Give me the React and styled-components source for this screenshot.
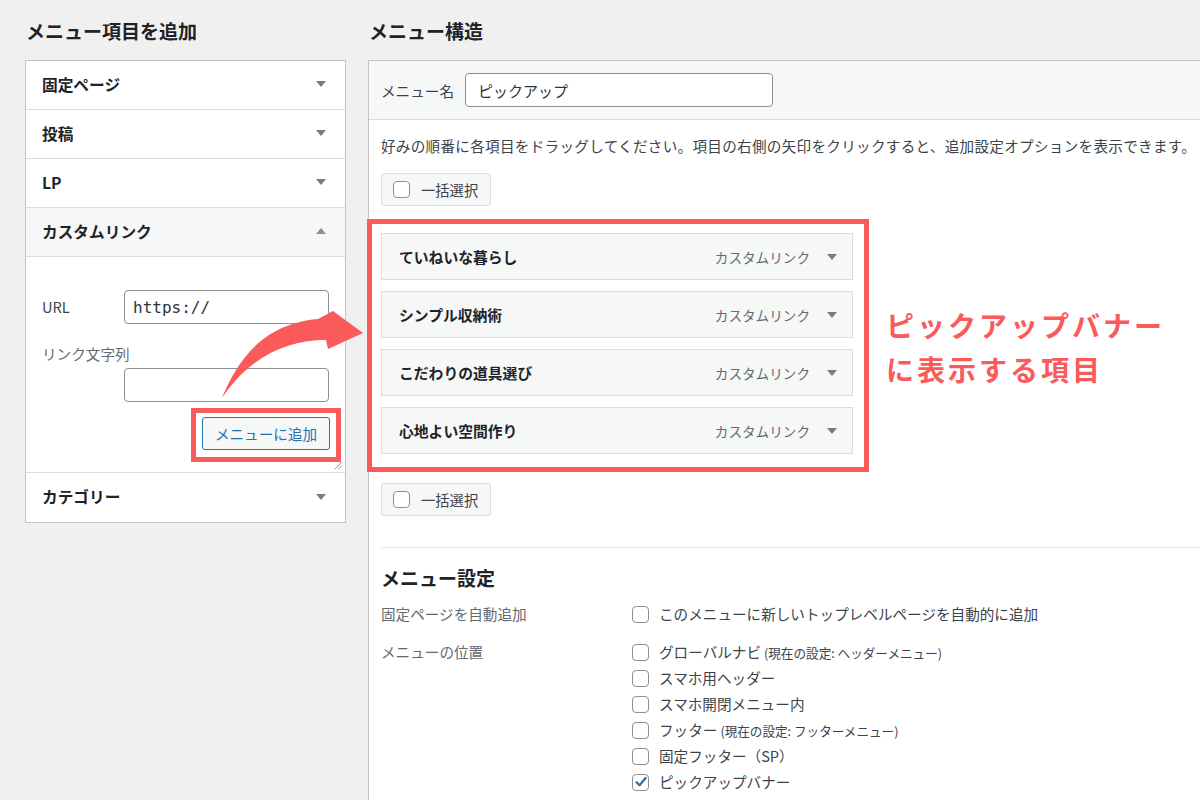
import React from "react";
import styled, { createGlobalStyle, css } from "styled-components";

const GlobalStyle = createGlobalStyle`
  html, body { margin: 0; padding: 0; }
  body {
    background: #f0f0f1;
    font-family: "Noto Sans CJK JP", "Noto Sans", sans-serif;
    color: #1d2327;
    overflow: hidden;
  }
  * { box-sizing: border-box; }
`;

const RED = "#fb5a5a";

const Page = styled.div`
  position: relative;
  display: flex;
  gap: 22px;
  padding: 19px 0 0 25px;
  height: 800px;
  overflow: hidden;
`;

const Column = styled.div`
  flex-shrink: 0;
  width: ${(p) => p.$w}px;
  display: flex;
  flex-direction: column;
`;

const Heading = styled.h2`
  margin: 0 0 17px 1px;
  font-size: 19px;
  line-height: 24px;
  font-weight: 700;
  color: #1d2327;
`;

const LeftPanel = styled.div`
  background: #fff;
  border: 1px solid #c3c4c7;
`;

const AccRow = styled.div`
  height: 49px;
  display: flex;
  align-items: center;
  justify-content: space-between;
  padding: 0 19px 2px 16px;
  border-bottom: ${(p) => (p.$last ? "none" : "1px solid #dcdcde")};
  background: ${(p) => (p.$open ? "#f6f7f7" : "#fff")};
  font-size: 15.7px;
  font-weight: 700;
  color: #1d2327;
`;

const Tri = styled.span`
  width: 0;
  height: 0;
  border-left: 5px solid transparent;
  border-right: 5px solid transparent;
  ${(p) =>
    p.$up
      ? css`border-bottom: 6px solid #8c8f94;`
      : css`border-top: 6px solid #787c82;`}
`;

const AccContent = styled.div`
  position: relative;
  display: flex;
  flex-direction: column;
  padding: 33px 16px 10px 16px;
  border-bottom: 1px solid #dcdcde;
`;

const FieldRow = styled.div`
  display: flex;
  align-items: center;
`;

const FieldLabel = styled.label`
  width: 82px;
  flex-shrink: 0;
  font-size: 14.6px;
  line-height: 20px;
  color: #3c434a;
`;

const BlockLabel = styled.label`
  display: block;
  margin-top: 21px;
  font-size: 14.6px;
  line-height: 18px;
  color: #646970;
`;

const TextInput = styled.div`
  width: ${(p) => p.$w}px;
  height: 34px;
  margin-left: ${(p) => p.$ml || 0}px;
  margin-top: ${(p) => p.$mt || 0}px;
  border: 1px solid #8c8f94;
  border-radius: 4px;
  background: #fff;
  display: flex;
  align-items: center;
  padding-left: ${(p) => p.$pl || 8}px;
  font-family: ${(p) =>
    p.$mono ? `"DejaVu Sans Mono", "Liberation Mono", monospace` : "inherit"};
  font-size: ${(p) => (p.$mono ? "16px" : "15px")};
  color: #2c3338;
`;

const ButtonRow = styled.div`
  display: flex;
  justify-content: flex-end;
  margin: 6px -12px 0 0;
`;

const RedFrame = styled.div`
  border: 5px solid ${RED};
  padding: ${(p) => p.$pad};
`;

const AddButton = styled.div`
  width: 128px;
  height: 33px;
  border: 1px solid #2271b1;
  border-radius: 3px;
  background: #f6f7f7;
  color: #2271b1;
  font-size: 14.6px;
  display: flex;
  align-items: center;
  justify-content: center;
`;

const ResizeGrip = styled.svg`
  position: absolute;
  right: 2px;
  bottom: 2px;
`;

const RightPanel = styled.div`
  background: #fff;
  border-top: 1px solid #c3c4c7;
  border-left: 1px solid #c3c4c7;
  flex: 1;
`;

const PanelHeader = styled.div`
  height: 59px;
  display: flex;
  align-items: center;
  gap: 11px;
  padding: 0 12px;
  background: #f6f7f7;
  border-bottom: 1px solid #dcdcde;
  font-size: 14.6px;
  color: #3c434a;
`;

const PanelBody = styled.div`
  padding: 16px 0 0 12px;
  display: flex;
  flex-direction: column;
`;

const Instruction = styled.p`
  margin: 0;
  font-size: 14.6px;
  letter-spacing: 0.28px;
  line-height: 20px;
  color: #3c434a;
  white-space: nowrap;
`;

const BulkButton = styled.div`
  width: 110px;
  height: 33px;
  margin-top: ${(p) => p.$mt}px;
  display: flex;
  align-items: center;
  gap: 11px;
  padding-left: 11px;
  background: #f6f7f7;
  border: 1px solid #dcdcde;
  border-radius: 3px;
  font-size: 14.3px;
  color: #3c434a;
`;

const Box = styled.span`
  width: 17px;
  height: 17px;
  flex-shrink: 0;
  border: 1px solid #8c8f94;
  border-radius: 4px;
  background: #fff;
  display: inline-flex;
  align-items: center;
  justify-content: center;
`;

const ItemsRow = styled.div`
  display: flex;
  align-items: center;
  margin: 13px 0 0 -14px;
`;

const ItemList = styled.div`
  width: 472px;
  display: flex;
  flex-direction: column;
  gap: 11px;
`;

const MenuItem = styled.div`
  height: 47px;
  display: flex;
  align-items: center;
  padding: 0 15px 0 17px;
  background: #f6f7f7;
  border: 1px solid #dcdcde;
`;

const ItemTitle = styled.span`
  flex: 1;
  font-size: 14.8px;
  font-weight: 700;
  color: #1d2327;
`;

const ItemType = styled.span`
  font-size: 13.6px;
  color: #646970;
  margin-right: 17px;
`;

const Annotation = styled.div`
  margin-left: 17px;
  font-size: 28px;
  line-height: 44px;
  letter-spacing: 3px;
  font-weight: 700;
  color: ${RED};
  white-space: nowrap;
  margin-top: 2px;
`;

const Divider = styled.hr`
  margin: 31px 0 0 0;
  border: none;
  border-top: 1px solid #e6e6e8;
`;

const SubHeading = styled.h3`
  margin: 18px 0 0 0;
  font-size: 19px;
  line-height: 24px;
  font-weight: 700;
  color: #1d2327;
`;

const SettingsGrid = styled.div`
  display: grid;
  grid-template-columns: 251px 1fr;
  row-gap: 12px;
  margin-top: 11px;
  font-size: 14.6px;
  line-height: 26px;
`;

const SettingLabel = styled.div`
  color: #646970;
`;

const OptionList = styled.div`
  display: flex;
  flex-direction: column;
`;

const Option = styled.div`
  display: flex;
  align-items: center;
  gap: 10px;
  height: 26px;
  color: #3c434a;
  white-space: nowrap;
`;

const Small = styled.span`
  font-size: 12.6px;
  margin-left: 3px;
`;

const ArrowSvg = styled.svg`
  position: absolute;
  left: 0;
  top: 0;
  pointer-events: none;
`;

const Checkbox = ({ checked }) => (
  <Box>
    {checked && (
      <svg width="14" height="14" viewBox="0 0 14 14">
        <path
          d="M2.5 7.2 L5.6 10.3 L11.6 3"
          fill="none"
          stroke="#2271b1"
          strokeWidth="2.2"
          strokeLinecap="round"
          strokeLinejoin="round"
        />
      </svg>
    )}
  </Box>
);

const accordion = ["固定ページ", "投稿", "LP"];
const items = ["ていねいな暮らし", "シンプル収納術", "こだわりの道具選び", "心地よい空間作り"];
const locations = [
  { label: "グローバルナビ", note: "(現在の設定: ヘッダーメニュー)" },
  { label: "スマホ用ヘッダー" },
  { label: "スマホ開閉メニュー内" },
  { label: "フッター", note: "(現在の設定: フッターメニュー)" },
  { label: "固定フッター（SP）" },
  { label: "ピックアップバナー", checked: true },
];

export default function App() {
  return (
    <>
      <GlobalStyle />
      <Page>
        <Column $w={321}>
          <Heading>メニュー項目を追加</Heading>
          <LeftPanel>
            {accordion.map((t) => (
              <AccRow key={t}>
                {t}
                <Tri />
              </AccRow>
            ))}
            <AccRow $open>
              カスタムリンク
              <Tri $up />
            </AccRow>
            <AccContent>
              <FieldRow>
                <FieldLabel>URL</FieldLabel>
                <TextInput $w={205} $mono>
                  https://
                </TextInput>
              </FieldRow>
              <BlockLabel>リンク文字列</BlockLabel>
              <TextInput $w={205} $ml={82} $mt={5} />
              <ButtonRow>
                <RedFrame $pad="4px 6px 7px 6px">
                  <AddButton>メニューに追加</AddButton>
                </RedFrame>
              </ButtonRow>
              <ResizeGrip width="10" height="10" viewBox="0 0 10 10">
                <path d="M2 9 L9 2 M5.5 9 L9 5.5" stroke="#8c8f94" strokeWidth="1" />
              </ResizeGrip>
            </AccContent>
            <AccRow $last>
              カテゴリー
              <Tri />
            </AccRow>
          </LeftPanel>
        </Column>

        <Column $w={870}>
          <Heading>メニュー構造</Heading>
          <RightPanel>
            <PanelHeader>
              メニュー名
              <TextInput $w={308} $pl={12}>
                ピックアップ
              </TextInput>
            </PanelHeader>
            <PanelBody>
              <Instruction>
                好みの順番に各項目をドラッグしてください。項目の右側の矢印をクリックすると、追加設定オプションを表示できます。
              </Instruction>
              <BulkButton $mt={17}>
                <Checkbox />
                一括選択
              </BulkButton>
              <ItemsRow>
                <RedFrame $pad="9px 11px 13px 9px">
                  <ItemList>
                    {items.map((t) => (
                      <MenuItem key={t}>
                        <ItemTitle>{t}</ItemTitle>
                        <ItemType>カスタムリンク</ItemType>
                        <Tri />
                      </MenuItem>
                    ))}
                  </ItemList>
                </RedFrame>
                <Annotation>
                  ピックアップバナー
                  <br />
                  に表示する項目
                </Annotation>
              </ItemsRow>
              <BulkButton $mt={11}>
                <Checkbox />
                一括選択
              </BulkButton>
              <Divider />
              <SubHeading>メニュー設定</SubHeading>
              <SettingsGrid>
                <SettingLabel>固定ページを自動追加</SettingLabel>
                <Option>
                  <Checkbox />
                  このメニューに新しいトップレベルページを自動的に追加
                </Option>
                <SettingLabel>メニューの位置</SettingLabel>
                <OptionList>
                  {locations.map((l) => (
                    <Option key={l.label}>
                      <Checkbox checked={l.checked} />
                      <span>
                        {l.label}
                        {l.note && <Small>{l.note}</Small>}
                      </span>
                    </Option>
                  ))}
                </OptionList>
              </SettingsGrid>
            </PanelBody>
          </RightPanel>
        </Column>

        <ArrowSvg width="400" height="420" viewBox="0 0 400 420">
          <path
            d="M222 398 C236 364 260 324 318 319 L333 311 L363 333 L328 349 L326 340 C288 340 250 356 222 398 Z"
            fill={RED}
          />
        </ArrowSvg>
      </Page>
    </>
  );
}
